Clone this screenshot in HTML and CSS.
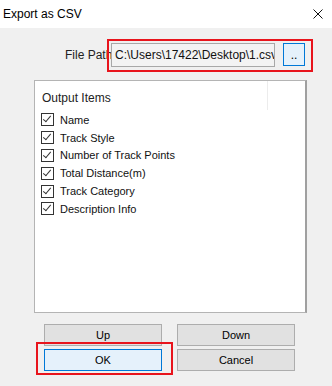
FILE: index.html
```html
<!DOCTYPE html>
<html>
<head>
    <title>Export as CSV</title>
    <link rel="stylesheet" href="styles.css">
</head>
<body>
    <div class="window">
        <div class="titlebar">
            <span class="title">Export as CSV</span>
            <svg class="close" width="10" height="10" viewBox="0 0 10 10">
                <path d="M0.5 0.5 L9.5 9.5 M9.5 0.5 L0.5 9.5" stroke="#111" stroke-width="1"/>
            </svg>
        </div>
        <div class="dialog">
            <div class="path-row">
                <span class="path-label">File Path</span>
                <div class="path-field">C:\Users\17422\Desktop\1.csv</div>
                <button class="browse">..</button>
            </div>
            <div class="items">
                <div class="items-header">
                    <span>Output Items</span>
                    <span class="header-divider"></span>
                </div>
                <ul class="item-list">
                    <li><span class="check"></span>Name</li>
                    <li><span class="check"></span>Track Style</li>
                    <li><span class="check"></span>Number of Track Points</li>
                    <li><span class="check"></span>Total Distance(m)</li>
                    <li><span class="check"></span>Track Category</li>
                    <li><span class="check"></span>Description Info</li>
                </ul>
            </div>
            <div class="buttons">
                <button class="btn">Up</button>
                <button class="btn">Down</button>
                <button class="btn default">OK</button>
                <button class="btn">Cancel</button>
            </div>
        </div>
        <!-- annotation boxes drawn over the dialog -->
        <div class="mark mark-path"></div>
        <div class="mark mark-ok"></div>
    </div>
</body>
</html>
```

FILE: styles.css
```css
body {
    margin: 0;
    font-family: "Liberation Sans", Arial, sans-serif;
    font-size: 12px;
    color: #000;
}

.window {
    position: relative;
    width: 332px;
    height: 386px;
    background-color: #f0f0f0;
    overflow: hidden;
}

.titlebar {
    height: 28px;
    background: white;
    display: flex;
    align-items: center;
    justify-content: space-between;
    padding: 0 9px 0 3px;
}

.dialog {
    padding-top: 15px;
}

.path-row {
    display: flex;
    align-items: flex-start;
    height: 24px;
    padding-left: 65px;
}

.path-label {
    width: 46px;
    line-height: 24px;
    white-space: nowrap;
    overflow: hidden;
    color: #222;
}

.path-field {
    width: 159px;
    height: 22px;
    line-height: 22px;
    border: 1px solid #a8a8a8;
    background-color: #f3f3f3;
    padding-left: 3px;
    white-space: nowrap;
    overflow: hidden;
    color: #111;
}

.browse {
    margin-left: 8px;
    width: 22px;
    height: 23px;
    padding: 0;
    border: 1px solid #0078d7;
    background-color: #e5f1fb;
    font-family: inherit;
    font-size: 12px;
    line-height: 18px;
}

.items {
    margin: 13px 0 0 34px;
    width: 270px;
    height: 231px;
    background: white;
    border: 1px solid #b4b4b4;
    border-right: 2px solid #a0a0a0;
}

.items-header {
    position: relative;
    height: 30px;
    padding-left: 7px;
    line-height: 34px;
    color: #222;
}

.header-divider {
    position: absolute;
    left: 232px;
    top: 0;
    width: 1px;
    height: 29px;
    background-color: #ececec;
}

.item-list {
    list-style: none;
    margin: 0;
    padding: 0 0 0 6px;
    font-size: 11px;
}

.item-list li {
    display: flex;
    align-items: center;
    height: 17.8px;
    color: #111;
}

.check {
    position: relative;
    width: 11px;
    height: 11px;
    border: 1px solid #333;
    margin-right: 6px;
    background: white;
}

.check::after {
    content: '';
    position: absolute;
    left: 3px;
    top: 0px;
    width: 3px;
    height: 7px;
    border: solid #333;
    border-width: 0 1px 1px 0;
    transform: rotate(40deg);
}

.buttons {
    display: grid;
    grid-template-columns: repeat(2, 118px);
    grid-auto-rows: 22px;
    gap: 3px 15px;
    margin: 11px 0 0 44px;
}

.btn {
    margin: 0;
    padding: 0;
    border: 1px solid #adadad;
    background-color: #e1e1e1;
    font-family: inherit;
    font-size: 11px;
    color: #000;
}

.btn.default {
    border-color: #0078d7;
    background-color: #e5f1fb;
}

.mark {
    position: absolute;
    border: 2px solid #e8141c;
    box-sizing: border-box;
}

.mark-path {
    left: 107px;
    top: 39px;
    width: 206px;
    height: 33px;
}

.mark-ok {
    left: 36px;
    top: 342px;
    width: 137px;
    height: 33px;
}
```
